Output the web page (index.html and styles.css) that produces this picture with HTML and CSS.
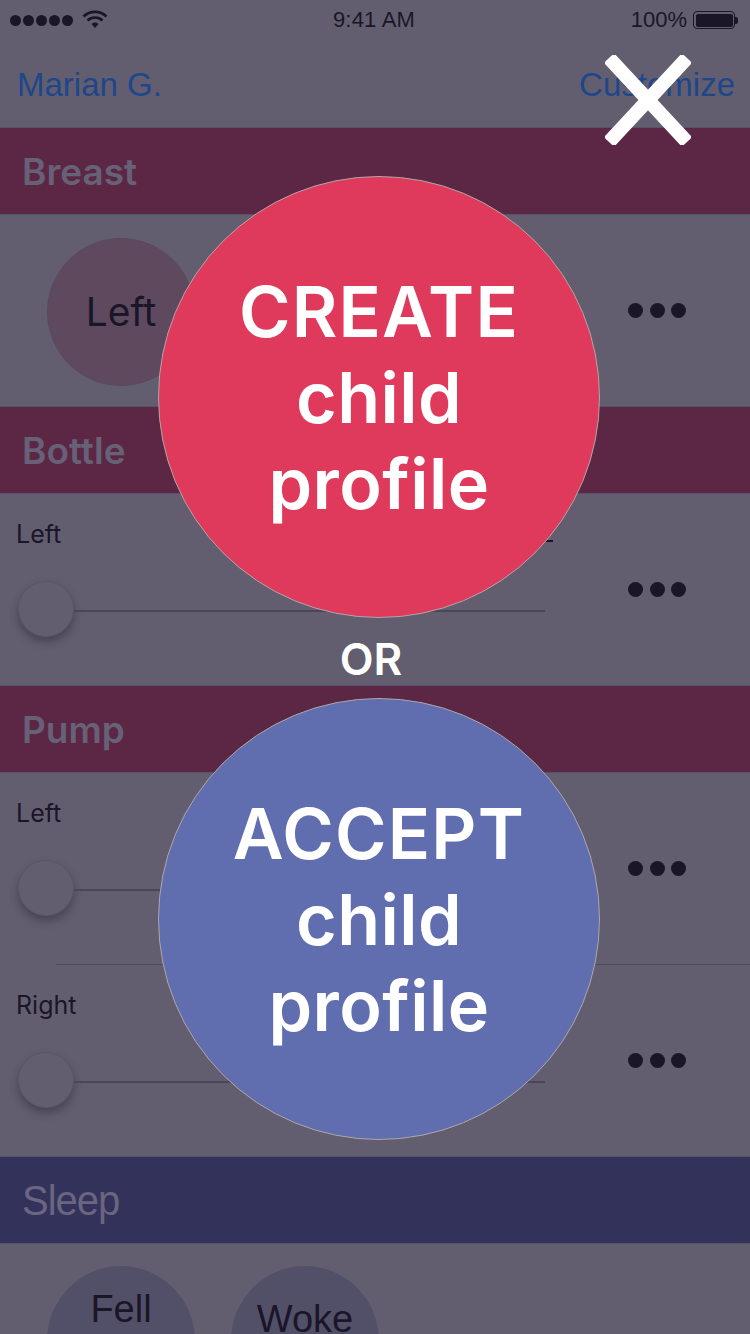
FILE: index.html
```html
<!DOCTYPE html>
<html>
<head>
<meta charset="utf-8">
<link rel="stylesheet" href="styles.css">
</head>
<body>
<div class="screen">
  <div class="status">
    <div class="status-left">
      <span class="sig"></span><span class="sig"></span><span class="sig"></span><span class="sig"></span><span class="sig"></span>
      <svg class="wifi" width="26" height="20" viewBox="0 0 26 20"><path d="M13 19 L9.5 15 A5 5 0 0 1 16.5 15 Z" fill="#1a1628"/><path d="M5.5 11.5 A11 11 0 0 1 20.5 11.5" stroke="#1a1628" stroke-width="2.6" fill="none"/><path d="M1.5 7.5 A16.5 16.5 0 0 1 24.5 7.5" stroke="#1a1628" stroke-width="2.6" fill="none"/></svg>
    </div>
    <div class="time">9:41 AM</div>
    <div class="status-right">
      <span class="pct">100%</span>
      <span class="battery"><span class="battery-fill"></span></span><span class="battery-tip"></span>
    </div>
  </div>
  <div class="nav">
    <span class="nav-link">Marian G.</span>
    <span class="nav-link">Customize</span>
  </div>

  <div class="header maroon"><span class="header-title">Breast</span></div>
  <div class="row breast-row">
    <div class="left-btns">
      <div class="round-btn breast-btn">Left</div>
    </div>
    <div class="dots"><i></i><i></i><i></i></div>
  </div>

  <div class="header maroon"><span class="header-title">Bottle</span></div>
  <div class="row slider-row">
    <div class="slider-col">
      <div class="label-line"><span class="lbl">Left</span><span class="dash"></span></div>
      <div class="slider"><span class="knob"></span><span class="track"></span></div>
    </div>
    <div class="dots"><i></i><i></i><i></i></div>
  </div>

  <div class="header maroon"><span class="header-title">Pump</span></div>
  <div class="row slider-row">
    <div class="slider-col">
      <div class="label-line"><span class="lbl">Left</span></div>
      <div class="slider"><span class="knob"></span><span class="track"></span></div>
    </div>
    <div class="dots"><i></i><i></i><i></i></div>
  </div>
  <div class="sep"></div>
  <div class="row slider-row">
    <div class="slider-col">
      <div class="label-line"><span class="lbl">Right</span></div>
      <div class="slider"><span class="knob"></span><span class="track"></span></div>
    </div>
    <div class="dots"><i></i><i></i><i></i></div>
  </div>

  <div class="header navy"><span class="header-title sleep-title">Sleep</span></div>
  <div class="row sleep-row">
    <div class="left-btns">
      <div class="round-btn sleep-btn"><span class="fell">Fell</span></div>
      <div class="round-btn sleep-btn"><span class="woke">Woke</span></div>
    </div>
    <div class="dots sleep-dots"><i></i><i></i><i></i></div>
  </div>

  <div class="overlay">
    <svg class="close" width="86" height="90" viewBox="0 0 86 90"><path d="M4 3 L82 87 M82 3 L4 87" stroke="#fff" stroke-width="14"/></svg>
    <div class="big-circle create">
      <span class="big-line caps">CREATE</span>
      <span class="big-line">child</span>
      <span class="big-line">profile</span>
    </div>
    <div class="or">OR</div>
    <div class="big-circle accept">
      <span class="big-line caps">ACCEPT</span>
      <span class="big-line">child</span>
      <span class="big-line">profile</span>
    </div>
  </div>
</div>
</body>
</html>
```
FILE: styles.css
```css
html, body {
  margin: 0;
  padding: 0;
}
body {
  width: 750px;
  height: 1334px;
  overflow: hidden;
  background: #625e6f;
  font-family: Inter, "Noto Sans", sans-serif;
}
.screen {
  position: relative;
  width: 750px;
  height: 1334px;
  overflow: hidden;
  background: #625e6f;
  display: flex;
  flex-direction: column;
}
.status {
  height: 40px;
  display: flex;
  align-items: center;
  justify-content: space-between;
  padding: 0 12px 0 10px;
  color: #1a1628;
  font-family: "Liberation Sans", sans-serif;
  flex-shrink: 0;
}
.status-left {
  display: flex;
  align-items: center;
  gap: 2px;
  width: 200px;
}
.sig {
  width: 11px;
  height: 11px;
  border-radius: 50%;
  background: #1a1628;
}
.wifi {
  margin-left: 7px;
  margin-top: -2px;
}
.time {
  font-size: 22px;
  letter-spacing: 0.2px;
}
.status-right {
  width: 200px;
  display: flex;
  justify-content: flex-end;
  align-items: center;
}
.pct {
  font-size: 22px;
  margin-right: 6px;
}
.battery {
  width: 42px;
  height: 18px;
  border: 1.5px solid #1a1628;
  border-radius: 4px;
  padding: 1.5px;
  box-sizing: border-box;
  display: flex;
}
.battery-fill {
  flex: 1;
  background: #1a1628;
  border-radius: 2px;
}
.battery-tip {
  width: 3px;
  height: 7px;
  background: #1a1628;
  border-radius: 0 2px 2px 0;
}
.nav {
  height: 87px;
  display: flex;
  align-items: center;
  justify-content: space-between;
  padding: 0 15px 0 17px;
  flex-shrink: 0;
}
.nav-link {
  color: #1e478b;
  font-family: "Liberation Sans", sans-serif;
  font-size: 33px;
  margin-top: 2px;
}
.header {
  height: 86px;
  border-top: 1px solid #57516a;
  display: flex;
  align-items: center;
  padding-left: 22px;
  flex-shrink: 0;
}
.maroon { background: #5c2744; }
.navy { background: #33325a; }
.header-title {
  font-size: 37px;
  font-weight: 600;
  color: #676177;
  margin-top: 1px;
}
.sleep-title {
  font-family: "Liberation Sans", sans-serif;
  font-weight: 400;
  font-size: 40px;
  letter-spacing: -1px;
  color: #6a6580;
  transform: scaleY(1.05);
}
.row {
  display: flex;
  align-items: center;
  flex-shrink: 0;
  border-top: 1px solid #57526a;
}
.breast-row { height: 191px; }
.left-btns {
  flex: 1;
  display: flex;
  gap: 38px;
  padding-left: 47px;
}
.round-btn {
  width: 146px;
  height: 146px;
  border-radius: 50%;
  display: flex;
  align-items: center;
  justify-content: center;
  color: #1a1628;
}
.breast-btn {
  background: #5e495e;
  border: 1px solid #574a60;
  font-size: 39px;
  margin-top: 2px;
}
.dots {
  width: 58px;
  margin-right: 64px;
  display: flex;
  justify-content: space-between;
}
.dots i {
  width: 15px;
  height: 15px;
  border-radius: 50%;
  background: #1a1628;
}
.slider-row { height: 191px; }
.slider-col {
  flex: 1;
  display: flex;
  flex-direction: column;
  padding-left: 16px;
  padding-top: 23px;
  height: 100%;
  box-sizing: border-box;
}
.label-line {
  display: flex;
  justify-content: space-between;
  align-items: center;
  width: 537px;
  height: 34px;
}
.lbl {
  font-size: 25px;
  color: #1a1628;
}
.dash {
  width: 10px;
  height: 2px;
  background: #1a1628;
  margin-top: 14px;
}
.slider {
  display: flex;
  align-items: center;
  margin-top: 30px;
}
.knob {
  width: 56px;
  height: 56px;
  border-radius: 50%;
  background: #625e6f;
  border: 1px solid #5a5668;
  box-sizing: border-box;
  box-shadow: 0 5px 8px rgba(40, 34, 55, 0.45);
  flex-shrink: 0;
  margin-left: 2px;
}
.track {
  width: 471px;
  height: 2px;
  background: #4a4658;
  margin-top: 3px;
}
.sep {
  height: 1px;
  background: #4f4b5e;
  margin-left: 56px;
  flex-shrink: 0;
}
.sep + .row { border-top: none; }
.sleep-row {
  height: 120px;
  align-items: flex-start;
  padding-top: 22px;
}
.sleep-btn {
  background: #524f68;
  font-family: "Liberation Sans", sans-serif;
  font-size: 38px;
  align-items: flex-start;
  height: 150px;
  width: 148px;
}
.sleep-btn + .sleep-btn { margin-left: -2px; }
.fell { margin-top: 22px; }
.woke { margin-top: 32px; }
.sleep-dots { margin-top: 82px; }

/* modal overlay */
.overlay {
  position: absolute;
  inset: 0;
  display: flex;
  flex-direction: column;
  align-items: center;
}
.close {
  position: absolute;
  left: 605px;
  top: 55px;
}
.big-circle {
  width: 442px;
  height: 442px;
  border-radius: 50%;
  border: 1px solid #b0a6a8;
  box-sizing: border-box;
  display: flex;
  flex-direction: column;
  align-items: center;
  justify-content: center;
  color: #fff;
  margin-left: 8px;
}
.create {
  margin-top: 176px;
  background: #df3a5c;
}
.accept {
  background: #606eb0;
}
.big-line {
  font-size: 70px;
  font-weight: 600;
  line-height: 84px;
  margin-top: 2px;
  letter-spacing: 0.4px;
}
.caps {
  letter-spacing: 1.2px;
}
.or {
  height: 78px;
  display: flex;
  align-items: center;
  font-size: 44px;
  font-weight: 600;
  color: #fff;
  margin-left: -8px;
  margin-top: 2px;
}
```
